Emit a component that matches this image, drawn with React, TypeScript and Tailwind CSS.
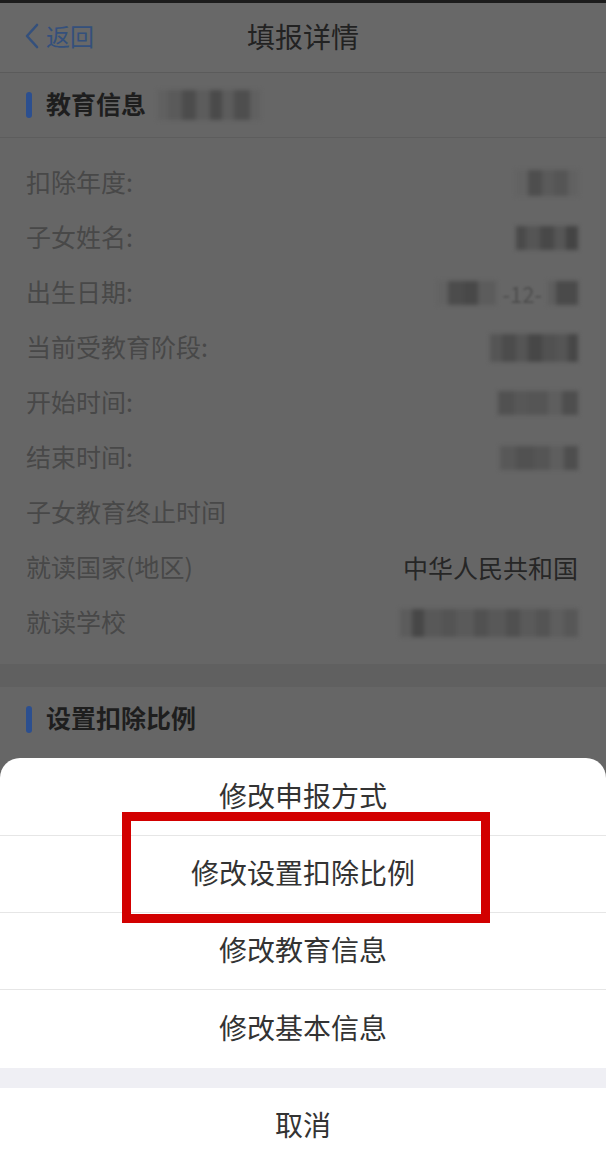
import React from "react";

type Cell = { w: number; c: string };

function Blur({ cells, h, className = "" }: { cells: Cell[]; h: number; className?: string }) {
  return (
    <div className={"flex blur-[2px] " + className} style={{ height: h }}>
      {cells.map((c, i) => (
        <div key={i} style={{ width: c.w, height: h, background: c.c }} />
      ))}
    </div>
  );
}

const rows: { label: string; value?: React.ReactNode }[] = [
  {
    label: "扣除年度:",
    value: (
      <Blur
        h={26}
        cells={[
          { w: 12, c: "#626262" },
          { w: 14, c: "#4e4e4e" },
          { w: 12, c: "#5a5a5a" },
          { w: 14, c: "#555" },
          { w: 10, c: "#616161" },
        ]}
      />
    ),
  },
  {
    label: "子女姓名:",
    value: (
      <Blur
        h={24}
        cells={[
          { w: 10, c: "#4a4a4a" },
          { w: 14, c: "#555" },
          { w: 14, c: "#484848" },
          { w: 12, c: "#565656" },
          { w: 12, c: "#444" },
        ]}
      />
    ),
  },
  {
    label: "出生日期:",
    value: (
      <div className="flex items-center">
        <Blur
          h={24}
          cells={[
            { w: 10, c: "#626262" },
            { w: 16, c: "#4c4c4c" },
            { w: 14, c: "#484848" },
            { w: 18, c: "#5c5c5c" },
          ]}
        />
        <span className="text-[22px] leading-none text-[#4e4e4e] blur-[1.2px] px-[6px]">-12-</span>
        <Blur
          h={24}
          cells={[
            { w: 8, c: "#5e5e5e" },
            { w: 22, c: "#4a4a4a" },
          ]}
        />
      </div>
    ),
  },
  {
    label: "当前受教育阶段:",
    value: (
      <Blur
        h={28}
        cells={[
          { w: 12, c: "#555" },
          { w: 14, c: "#4c4c4c" },
          { w: 12, c: "#555" },
          { w: 14, c: "#474747" },
          { w: 14, c: "#515151" },
          { w: 12, c: "#555" },
          { w: 10, c: "#474747" },
        ]}
      />
    ),
  },
  {
    label: "开始时间:",
    value: (
      <Blur
        h={24}
        cells={[
          { w: 16, c: "#515151" },
          { w: 14, c: "#575757" },
          { w: 20, c: "#555" },
          { w: 14, c: "#5e5e5e" },
          { w: 16, c: "#4e4e4e" },
        ]}
      />
    ),
  },
  {
    label: "结束时间:",
    value: (
      <Blur
        h={24}
        cells={[
          { w: 16, c: "#585858" },
          { w: 18, c: "#515151" },
          { w: 16, c: "#555" },
          { w: 14, c: "#5e5e5e" },
          { w: 14, c: "#4e4e4e" },
        ]}
      />
    ),
  },
  { label: "子女教育终止时间" },
  {
    label: "就读国家(地区)",
    value: <span className="text-[25px] leading-none text-[#262626]">中华人民共和国</span>,
  },
  {
    label: "就读学校",
    value: (
      <Blur
        h={28}
        cells={[
          { w: 12, c: "#5c5c5c" },
          { w: 12, c: "#474747" },
          { w: 18, c: "#585858" },
          { w: 14, c: "#545454" },
          { w: 18, c: "#5a5a5a" },
          { w: 14, c: "#515151" },
          { w: 18, c: "#585858" },
          { w: 14, c: "#505050" },
          { w: 16, c: "#5a5a5a" },
          { w: 14, c: "#545454" },
          { w: 14, c: "#5e5e5e" },
          { w: 14, c: "#575757" },
        ]}
      />
    ),
  },
];

const sheetItems = [
  { text: "修改申报方式", h: "h-[78px]" },
  { text: "修改设置扣除比例", h: "h-[77px]" },
  { text: "修改教育信息", h: "h-[77px]" },
  { text: "修改基本信息", h: "h-[78px]" },
];

export default function App() {
  return (
    <div className="relative w-[606px] h-[1170px] overflow-hidden bg-[#666666] font-['Noto_Sans_CJK_SC','Noto_Sans',sans-serif]">
      <div className="h-[3px] bg-[#1c1c1c]" />
      {/* nav */}
      <div className="relative h-[70px] flex items-center pb-[4px] border-b border-[#5b5b5b] bg-[#686868]">
        <div className="flex items-center pl-[24px] gap-[6px] text-[#34507c]">
          <svg width="16" height="26" viewBox="0 0 16 26" fill="none">
            <polyline points="13,2 3,13 13,24" stroke="#34507c" strokeWidth="2.6" strokeLinecap="round" strokeLinejoin="round" />
          </svg>
          <span className="text-[24px] leading-none">返回</span>
        </div>
        <div className="absolute inset-0 pb-[4px] flex items-center justify-center pointer-events-none">
          <span className="text-[28px] leading-none text-[#222222]">填报详情</span>
        </div>
      </div>
      {/* header 1 */}
      <div className="h-[65px] flex items-center pl-[26px] border-b border-[#5d5d5d]">
        <div className="w-[6px] h-[26px] rounded-full bg-[#2c4f8f]" />
        <span className="ml-[14px] mb-[4px] text-[25px] leading-none font-bold text-[#1e1e1e]">教育信息</span>
        <Blur
          className="ml-[12px]"
          h={30}
          cells={[
            { w: 10, c: "#606060" },
            { w: 14, c: "#5a5a5a" },
            { w: 14, c: "#4c4c4c" },
            { w: 14, c: "#5c5c5c" },
            { w: 12, c: "#4a4a4a" },
            { w: 12, c: "#5c5c5c" },
            { w: 16, c: "#4e4e4e" },
            { w: 10, c: "#606060" },
          ]}
        />
      </div>
      {/* rows */}
      <div className="flex flex-col pt-[17px] pb-[14px]">
        {rows.map((r) => (
          <div key={r.label} className="h-[55px] flex items-center justify-between pl-[26px] pr-[28px]">
            <span className="text-[25px] leading-none mb-[3px] text-[#484848]">{r.label}</span>
            {r.value}
          </div>
        ))}
      </div>
      {/* gap band */}
      <div className="h-[23px] bg-[#606060]" />
      {/* header 2 */}
      <div className="h-[64px] flex items-center pl-[26px]">
        <div className="w-[6px] h-[27px] rounded-full bg-[#2c4f8f]" />
        <span className="ml-[14px] mb-[4px] text-[25px] leading-none font-bold text-[#1e1e1e]">设置扣除比例</span>
      </div>

      {/* action sheet */}
      <div className="absolute left-0 right-0 top-[758px] bottom-0 bg-white rounded-t-[20px] flex flex-col overflow-hidden">
        {sheetItems.map((it, i) => (
          <div
            key={it.text}
            className={
              it.h +
              " flex items-center justify-center pb-[4px] text-[28px] leading-none text-[#333333] " +
              (i < sheetItems.length - 1 ? "border-b border-[#e6e6e6]" : "")
            }
          >
            {it.text}
          </div>
        ))}
        <div className="h-[20px] bg-[#efeff4]" />
        <div className="flex-1 flex items-center justify-center pb-[10px] text-[28px] leading-none text-[#333333]">取消</div>
      </div>

      {/* red highlight box */}
      <div className="absolute left-[122px] top-[812px] w-[368px] h-[111px] border-[9px] border-[#d20000]" />
    </div>
  );
}
